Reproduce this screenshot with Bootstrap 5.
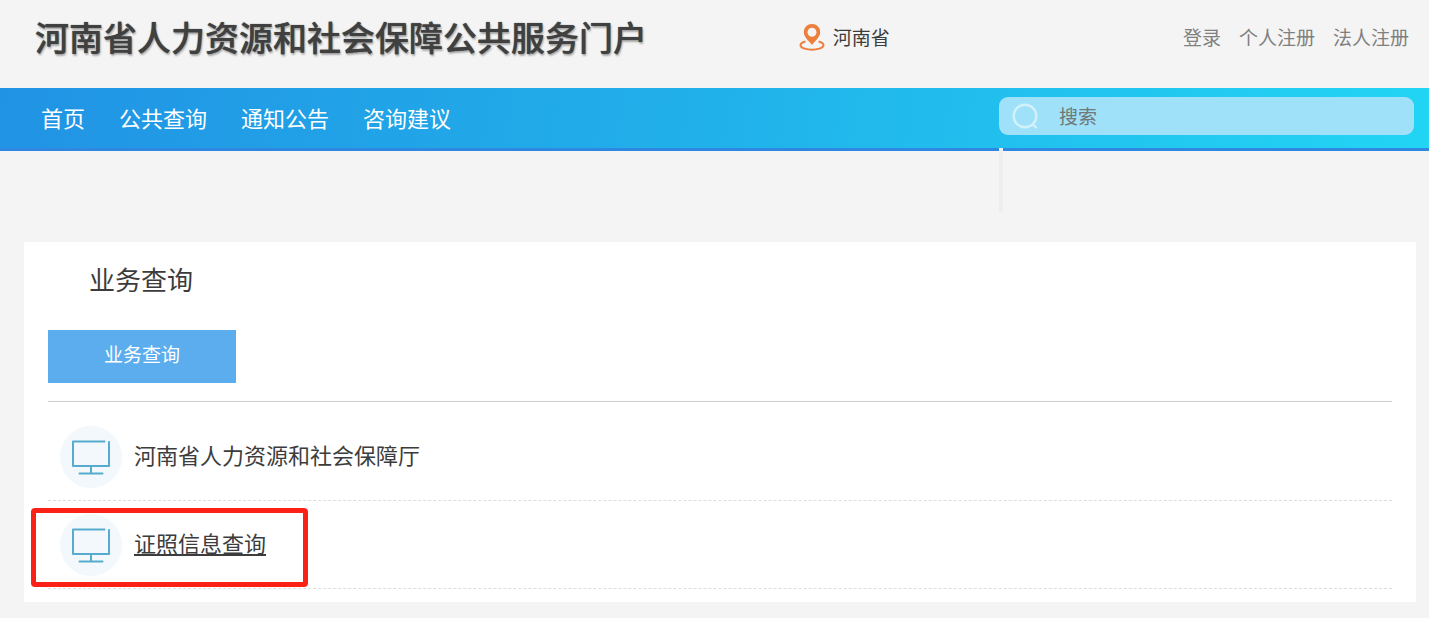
<!DOCTYPE html>
<html lang="zh-CN">
<head>
<meta charset="utf-8">
<meta name="viewport" content="width=device-width, initial-scale=1">
<title>河南省人力资源和社会保障公共服务门户</title>
<link href="https://cdn.jsdelivr.net/npm/bootstrap@5.3.0/dist/css/bootstrap.min.css" rel="stylesheet">
<style>
body { background: #f4f4f4; color: #3c3c3c; font-family: "Noto Sans CJK SC", sans-serif; font-size: 19px; line-height: 28px; }
a { color: inherit; text-decoration: none; }
.site-header { height: 88px; padding: 0 20px 14px 35px; }
.site-title { flex: 0 0 55%; font-size: 34px; line-height: 44px; font-weight: 500; color: #404040; text-shadow: 0 0 1px #404040, 1px 2px 2px rgba(0,0,0,.3); }
.user-links { color: #808080; gap: 18px; }
.main-nav { height: 63px; padding: 0 15px 0 41px; color: #fff; background: linear-gradient(100deg, #2193e4, #21b1ea 50%, #22d5f4); border-bottom: 3px solid #2e87e0; }
.menu-list { padding-bottom: 2px; font-size: 22px; gap: 34px; }
.search { width: 415px; height: 38px; margin-top: 9px; }
.search svg { left: 13px; top: 6px; pointer-events: none; }
.search input { height: 38px; padding: 0 16px 2px 60px; border: 0; border-radius: 9px; background: #9fe1f8; color: #666; font-size: 19px; }
.search input:focus { background: #b4e8fa; }
.search input::placeholder { color: #707878; opacity: 1; }
.suggestions { left: 0; top: 51px; height: 64px; border-left: 4px solid #eee; }
.panel { margin: 91px 13px 16px 24px; padding: 19px 24px 13px; background: #fff; }
.panel-title { margin: 0 0 33px 41px; font-size: 26px; line-height: 36px; font-weight: 400; }
.tab-btn { width: 188px; height: 53px; padding: 0 0 4px; border-radius: 0; background: #5badee; color: #fff; font-size: 19px; }
.tab-btn:hover { background: #4a9fe2; color: #fff; }
.tabs { padding-bottom: 18px; border-bottom: 1px solid #ccc; margin-bottom: 11px; }
.service { height: 88px; padding-left: 12px; gap: 12px; border-bottom: 1px dashed #ddd; font-size: 22px; }
.service a { padding-bottom: 5px; }
.disc { width: 62px; height: 62px; margin-top: 1px; background: #f2f8fb; }
.service a.current { text-decoration: underline; text-decoration-thickness: 2px; text-underline-offset: 2px; }
.marker { left: -17px; top: 7px; width: 277px; height: 79px; border: 5px solid #fb2116; border-radius: 4px; pointer-events: none; }
</style>
</head>
<body>
<header class="site-header d-flex align-items-center">
  <h1 class="site-title text-nowrap m-0">河南省人力资源和社会保障公共服务门户</h1>
  <a class="d-flex align-items-center ms-2" href="#">
    <svg width="26" height="28" viewBox="0 0 26 28" class="me-2" aria-hidden="true">
      <path d="M13 1a8 8 0 0 0-8.200 8.200C4.800 14 10 18 13 22c3-4 8.200-8 8.200-12.800A8 8 0 0 0 13 1zm0 3.800a4.500 4.500 0 1 1 0 9 4.500 4.500 0 0 1 0-9z" fill="#ec7f3c" fill-rule="evenodd"/>
      <path d="M6.500 18.500C0 20 0 24 5.500 25.600c4.500 1.300 10.500 1.300 15 0C26 24 26 20 19.500 18.500" fill="none" stroke="#ec7f3c" stroke-width="2"/>
    </svg>
    <span>河南省</span>
  </a>
  <nav class="user-links d-flex ms-auto" aria-label="用户">
    <a href="#">登录</a>
    <a href="#">个人注册</a>
    <a href="#">法人注册</a>
  </nav>
</header>
<nav class="main-nav d-flex justify-content-between" aria-label="主导航">
  <div class="menu-list d-flex align-items-center">
    <a href="#">首页</a>
    <a href="#">公共查询</a>
    <a href="#">通知公告</a>
    <a href="#">咨询建议</a>
  </div>
  <form class="search position-relative" role="search">
    <input class="form-control shadow-none" type="search" placeholder="搜索" aria-label="搜索">
    <svg class="position-absolute" width="27" height="27" viewBox="0 0 27 27" fill="none" stroke="#d3f1fb" stroke-width="2.400" aria-hidden="true">
      <circle cx="13" cy="13" r="11.300"/><path d="M20.500 21l4 4"/>
    </svg>
    <div class="suggestions position-absolute"></div>
  </form>
</nav>
<main class="panel">
  <h2 class="panel-title">业务查询</h2>
  <div class="tabs d-flex"><button type="button" class="btn tab-btn">业务查询</button></div>
  <ul class="list-unstyled m-0">
    <li class="service d-flex align-items-center">
      <span class="disc rounded-circle d-flex align-items-center justify-content-center">
        <svg width="40" height="36" viewBox="0 0 40 36" fill="none" stroke="#57abcf" stroke-width="2" stroke-linecap="round" stroke-linejoin="round" aria-hidden="true"><path d="M33.500 2.500H2V27h36V3M20 27.500v7M8.500 34.500h23"/></svg>
      </span>
      <a href="#">河南省人力资源和社会保障厅</a>
    </li>
    <li class="service d-flex align-items-center position-relative">
      <span class="disc rounded-circle d-flex align-items-center justify-content-center">
        <svg width="40" height="36" viewBox="0 0 40 36" fill="none" stroke="#57abcf" stroke-width="2" stroke-linecap="round" stroke-linejoin="round" aria-hidden="true"><path d="M33.500 2.500H2V27h36V3M20 27.500v7M8.500 34.500h23"/></svg>
      </span>
      <a class="current" href="#">证照信息查询</a>
      <span class="marker position-absolute"></span>
    </li>
  </ul>
</main>
<script src="https://cdn.jsdelivr.net/npm/bootstrap@5.3.0/dist/js/bootstrap.bundle.min.js"></script>
</body>
</html>
